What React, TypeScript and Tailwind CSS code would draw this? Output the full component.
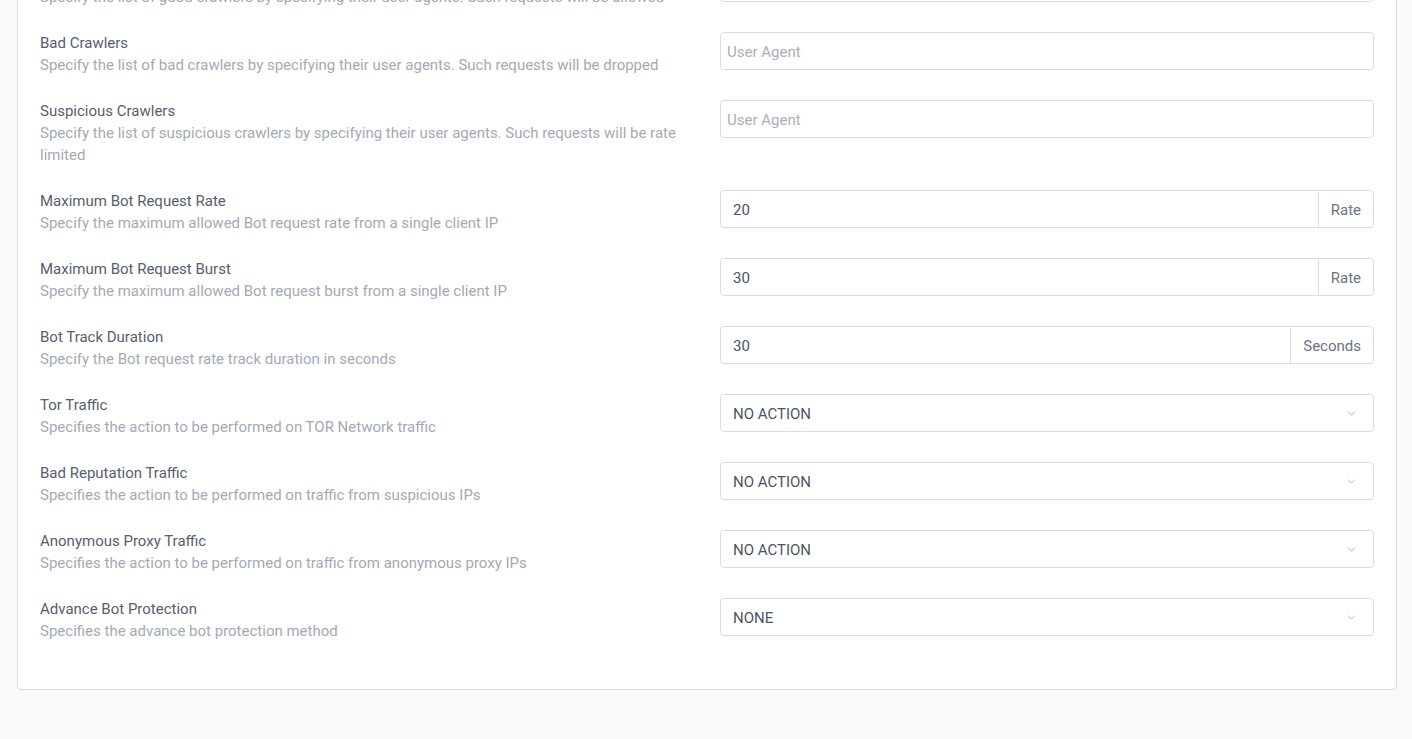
import { ChevronDown } from 'lucide-react';

type Row = {
  label: string;
  help: string;
  kind: 'tags' | 'addon' | 'select';
  value?: string;
  addon?: string;
};

const rows: Row[] = [
  {
    label: 'Good Crawlers',
    help: 'Specify the list of good crawlers by specifying their user agents. Such requests will be allowed',
    kind: 'tags',
  },
  {
    label: 'Bad Crawlers',
    help: 'Specify the list of bad crawlers by specifying their user agents. Such requests will be dropped',
    kind: 'tags',
  },
  {
    label: 'Suspicious Crawlers',
    help: 'Specify the list of suspicious crawlers by specifying their user agents. Such requests will be rate limited',
    kind: 'tags',
  },
  {
    label: 'Maximum Bot Request Rate',
    help: 'Specify the maximum allowed Bot request rate from a single client IP',
    kind: 'addon',
    value: '20',
    addon: 'Rate',
  },
  {
    label: 'Maximum Bot Request Burst',
    help: 'Specify the maximum allowed Bot request burst from a single client IP',
    kind: 'addon',
    value: '30',
    addon: 'Rate',
  },
  {
    label: 'Bot Track Duration',
    help: 'Specify the Bot request rate track duration in seconds',
    kind: 'addon',
    value: '30',
    addon: 'Seconds',
  },
  {
    label: 'Tor Traffic',
    help: 'Specifies the action to be performed on TOR Network traffic',
    kind: 'select',
    value: 'NO ACTION',
  },
  {
    label: 'Bad Reputation Traffic',
    help: 'Specifies the action to be performed on traffic from suspicious IPs',
    kind: 'select',
    value: 'NO ACTION',
  },
  {
    label: 'Anonymous Proxy Traffic',
    help: 'Specifies the action to be performed on traffic from anonymous proxy IPs',
    kind: 'select',
    value: 'NO ACTION',
  },
  {
    label: 'Advance Bot Protection',
    help: 'Specifies the advance bot protection method',
    kind: 'select',
    value: 'NONE',
  },
];

function Field({ row }: { row: Row }) {
  if (row.kind === 'tags') {
    return (
      <div className="h-[38px] flex items-center pl-[6px] pt-px border border-[#d9dce1] rounded bg-white text-[#a9afb9]">
        User Agent
      </div>
    );
  }
  if (row.kind === 'addon') {
    return (
      <div className="h-[38px] flex pt-px border border-[#d9dce1] rounded bg-white">
        <div className="flex-1 flex items-center px-3 text-[#4b5563]">{row.value}</div>
        <div className="flex items-center px-3 border-l border-[#d9dce1] text-[#6b7482]">{row.addon}</div>
      </div>
    );
  }
  return (
    <div className="h-[38px] flex items-center justify-between pl-3 pr-[15px] pt-px border border-[#d9dce1] rounded bg-white text-[#4b5563]">
      <span>{row.value}</span>
      <ChevronDown className="w-[13px] h-[13px] text-[#9aa0aa]" strokeWidth={1.5} />
    </div>
  );
}

export default function App() {
  return (
    <div
      className="min-h-screen flex flex-col bg-[#f8f9fb] pl-[17px] pr-[15px] pb-[50px] text-[15px] leading-[22px]"
      style={{ fontFamily: 'Roboto, "Noto Sans", sans-serif' }}
    >
      <div className="-mt-[59px] bg-white border border-[#d9dce1] rounded px-[22px] pt-[22px] pb-[47px]">
        <div className="flex flex-col gap-6">
          {rows.map((row) => (
            <div key={row.label} className="grid grid-cols-2 gap-x-[26px]">
              <div>
                <div className="text-[#56606e]">{row.label}</div>
                <div className="text-[#a3aab5]">{row.help}</div>
              </div>
              <Field row={row} />
            </div>
          ))}
        </div>
      </div>
    </div>
  );
}
